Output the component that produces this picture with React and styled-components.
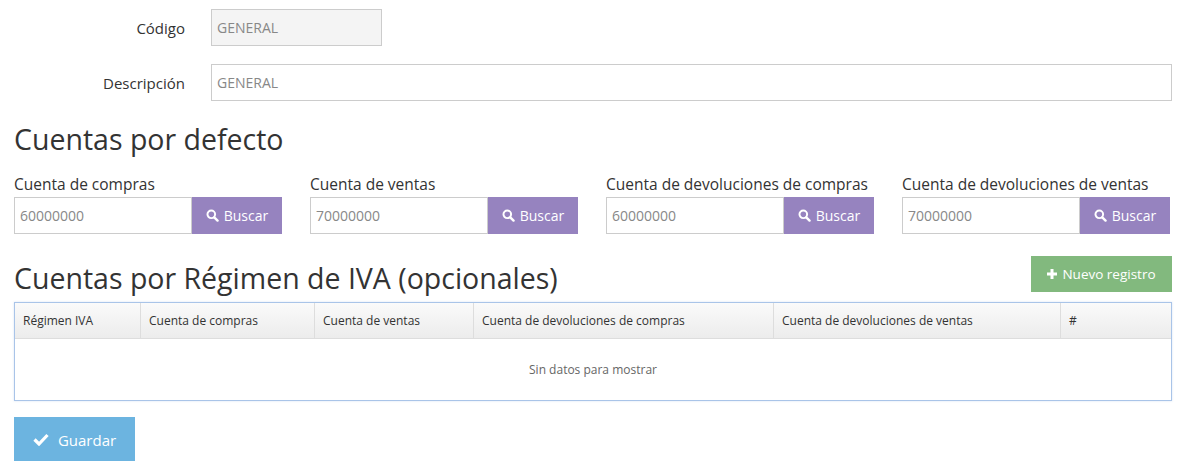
import styled, { createGlobalStyle } from 'styled-components'

const GlobalStyle = createGlobalStyle`
  body { margin: 0; background: #fff; font-family: "Open Sans", sans-serif; color: #333; }
  * { box-sizing: border-box; }
`

const Page = styled.div`
  padding: 9px 7px 0 14px;
`

const FormRow = styled.div`
  display: flex;
  align-items: center;
  margin-bottom: 18px;
`

const RowLabel = styled.label`
  width: 171px;
  text-align: right;
  font-size: 15px;
  color: #333;
  margin-right: 26px;
`

const Input = styled.input`
  height: 37px;
  border: 1px solid #ccc;
  border-radius: 0;
  padding: 0 5px;
  font-family: "Open Sans", sans-serif;
  font-size: 14px;
  color: #888;
  background: ${p => (p.$disabled ? '#f4f4f4' : '#fff')};
  width: ${p => p.$w || '100%'};
  flex: ${p => (p.$grow ? 1 : 'none')};
  min-width: 0;
  outline: none;
`

const Heading = styled.h2`
  font-weight: 400;
  font-size: 28.5px;
  margin: ${p => p.$m || '0'};
  line-height: 40px;
  color: #333;
`

const Grid = styled.div`
  display: grid;
  grid-template-columns: repeat(4, 268px);
  column-gap: 28px;
  margin-top: 14px;
`

const FieldLabel = styled.div`
  font-size: 15.5px;
  line-height: 22px;
  margin-bottom: 2px;
`

const Group = styled.div`
  display: flex;
`

const Btn = styled.button`
  display: flex;
  align-items: center;
  justify-content: center;
  gap: 5px;
  border: none;
  border-radius: 0;
  color: #fff;
  font-family: "Open Sans", sans-serif;
  font-size: ${p => p.$fs || 14}px;
  background: ${p => p.$bg};
  height: ${p => p.$h}px;
  width: ${p => p.$w}px;
  flex: none;
  padding: 0;
`

const SectionHead = styled.div`
  display: flex;
  justify-content: space-between;
  align-items: flex-end;
  margin-top: 22px;
`

const Table = styled.div`
  border: 1px solid #a9c4e8;
  margin-top: 4px;
  box-shadow: 0 0 2px rgba(120,160,220,0.3);
`

const HeadRow = styled.div`
  display: grid;
  grid-template-columns: 126px 174px 159px 300px 287px 1fr;
  height: 36px;
  background: linear-gradient(#fafafa, #ececec);
  border-bottom: 1px solid #ddd;
`

const Th = styled.div`
  font-size: 12px;
  display: flex;
  align-items: center;
  padding-left: 8px;
  border-right: ${p => (p.$last ? 'none' : '1px solid #ddd')};
`

const Empty = styled.div`
  height: 61px;
  display: flex;
  align-items: center;
  justify-content: center;
  font-size: 12px;
  color: #666;
`

const Footer = styled.div`
  margin-top: 16px;
`

const Search = () => (
  <svg width="13" height="13" viewBox="0 0 16 16">
    <circle cx="6.5" cy="6.5" r="4.7" fill="none" stroke="#fff" strokeWidth="2.4" />
    <path d="M10.2 10.2l4 4" stroke="#fff" strokeWidth="3" strokeLinecap="round" />
  </svg>
)

const Plus = () => (
  <svg width="10" height="10" viewBox="0 0 10 10">
    <path d="M5 0v10M0 5h10" stroke="#fff" strokeWidth="3" />
  </svg>
)

const Check = () => (
  <svg width="16" height="13" viewBox="0 0 16 13">
    <path d="M1.5 6.5l4.5 4.5L14.5 2" fill="none" stroke="#fff" strokeWidth="3.2" />
  </svg>
)

const fields = [
  ['Cuenta de compras', '60000000'],
  ['Cuenta de ventas', '70000000'],
  ['Cuenta de devoluciones de compras', '60000000'],
  ['Cuenta de devoluciones de ventas', '70000000'],
]

const cols = ['Régimen IVA', 'Cuenta de compras', 'Cuenta de ventas', 'Cuenta de devoluciones de compras', 'Cuenta de devoluciones de ventas', '#']

export default function App() {
  return (
    <>
      <GlobalStyle />
      <Page>
        <FormRow>
          <RowLabel>Código</RowLabel>
          <Input $w="171px" $disabled readOnly value="GENERAL" />
        </FormRow>
        <FormRow>
          <RowLabel>Descripción</RowLabel>
          <Input $grow readOnly value="GENERAL" />
        </FormRow>
        <Heading $m="1px 0 0">Cuentas por defecto</Heading>
        <Grid>
          {fields.map(([l, v]) => (
            <div key={l}>
              <FieldLabel>{l}</FieldLabel>
              <Group>
                <Input $grow readOnly value={v} />
                <Btn $bg="#9683bf" $h={37} $w={90}><Search />Buscar</Btn>
              </Group>
            </div>
          ))}
        </Grid>
        <SectionHead>
          <Heading>Cuentas por Régimen de IVA (opcionales)</Heading>
          <Btn $bg="#82b97e" $h={36} $w={141} $fs={13.5} style={{ marginBottom: 6 }}><Plus />Nuevo registro</Btn>
        </SectionHead>
        <Table>
          <HeadRow>
            {cols.map((c, i) => <Th key={c} $last={i === cols.length - 1}>{c}</Th>)}
          </HeadRow>
          <Empty>Sin datos para mostrar</Empty>
        </Table>
        <Footer>
          <Btn $bg="#6cb4e0" $h={45} $w={121} $fs={15} style={{ gap: 9 }}><Check />Guardar</Btn>
        </Footer>
      </Page>
    </>
  )
}
